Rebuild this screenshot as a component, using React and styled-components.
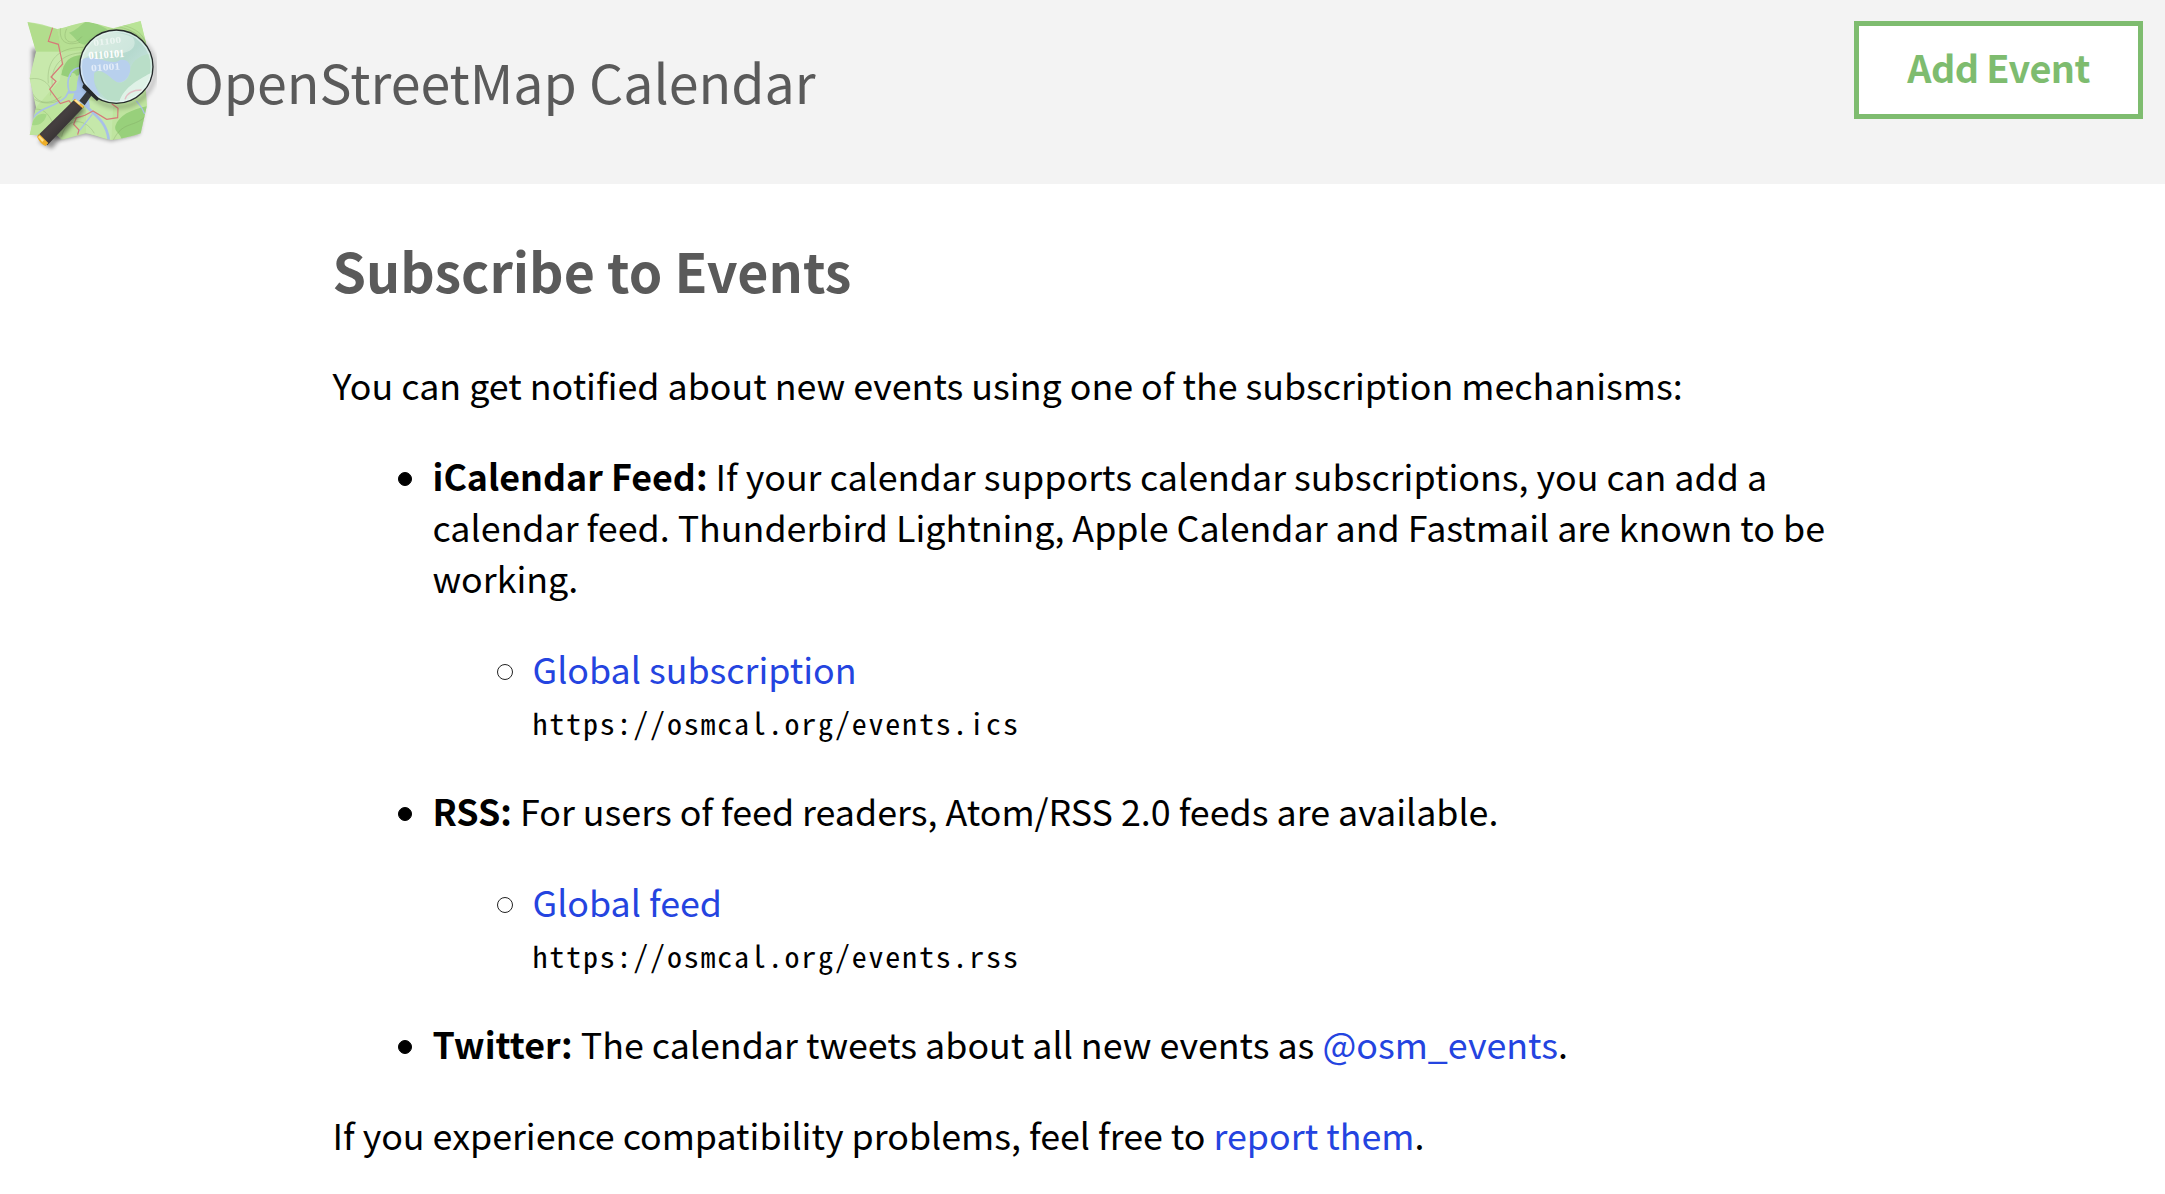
import React from "react";
import styled, { createGlobalStyle } from "styled-components";

const Global = createGlobalStyle`
  body {
    margin: 0;
    background: #fff;
    color: #000;
    font-family: "Noto Sans CJK SC", "Noto Sans", sans-serif;
    font-size: 35.8px;
    line-height: 51px;
  }
`;

const Header = styled.header`
  display: flex;
  justify-content: space-between;
  align-items: flex-start;
  box-sizing: border-box;
  height: 184px;
  padding: 18px 22px 0 24px;
  background: #f3f3f3;
`;

const Brand = styled.a`
  display: flex;
  align-items: flex-start;
  gap: 27px;
  color: #5a5a5a;
`;

const Logo = styled.svg`
  display: block;
  width: 133px;
  height: 138px;
`;

const Title = styled.span`
  margin-top: 23px;
  font-size: 53.7px;
  line-height: 80px;
  white-space: nowrap;
`;

const AddButton = styled.a`
  margin-top: 3px;
  width: 279px;
  height: 88px;
  border: 5px solid #7ebc6f;
  background: #fff;
  color: #7ebc6f;
  font-size: 37.8px;
  font-weight: 700;
  letter-spacing: -0.6px;
  line-height: 82px;
  text-align: center;
`;

const Main = styled.main`
  width: 1500px;
  margin: 0 auto;
`;

const Heading = styled.h1`
  margin: 46px 0 49px;
  color: #5a5a5a;
  font-size: 53.7px;
  line-height: 80px;
`;

const Paragraph = styled.p`
  margin: 0 0 40px;
`;

const List = styled.ul`
  margin: 0 0 40px;
  padding: 0 0 0 100px;
  list-style: none;
`;

const Item = styled.li`
  margin-bottom: 40px;

  &::before {
    content: "";
    display: inline-block;
    box-sizing: border-box;
    width: ${(p) => (p.$hollow ? 16 : 14)}px;
    height: ${(p) => (p.$hollow ? 16 : 14)}px;
    margin-left: ${(p) => (p.$hollow ? -36 : -35)}px;
    margin-right: ${(p) => (p.$hollow ? 20 : 21)}px;
    border: 1px solid ${(p) => (p.$hollow ? "#222" : "#000")};
    border-radius: 50%;
    background: ${(p) => (p.$hollow ? "transparent" : "#000")};
    vertical-align: ${(p) => (p.$hollow ? 4 : 5)}px;
  }
`;

const SubList = styled(List)`
  margin: 40px 0 0;
`;

const Link = styled.a`
  color: #2444e0;
`;

const Code = styled.code`
  display: block;
  height: 51px;
  font-family: "Noto Sans Mono CJK SC", "Liberation Mono", monospace;
  font-size: 30px;
  letter-spacing: 1.8px;
  line-height: 56px;
`;

function OsmLogo() {
  return (
    <Logo viewBox="72 54 399 414" role="img" aria-label="OpenStreetMap">
      <defs>
        <filter id="soft" x="-20%" y="-20%" width="140%" height="140%">
          <feGaussianBlur stdDeviation="7" />
        </filter>
        <linearGradient id="lens" x1="0" y1="0" x2="1" y2="1">
          <stop offset="0" stopColor="#d3e9dc" />
          <stop offset="0.5" stopColor="#b5d9ce" />
          <stop offset="1" stopColor="#dcecf0" />
        </linearGradient>
        <linearGradient id="grip" x1="0" y1="0" x2="1" y2="1">
          <stop offset="0" stopColor="#222" />
          <stop offset="0.45" stopColor="#453f40" />
          <stop offset="1" stopColor="#1b1b1b" />
        </linearGradient>
        <clipPath id="sheet">
          <path d="M82 66C112 68 142 78 172 87C202 82 228 70 256 66C286 68 312 78 340 85L422 63L441 140L433 220L441 315L422 400C394 409 366 417 334 420C306 416 284 404 258 400L186 419L170 405L89 405L108 322L89 235L108 155Z" />
        </clipPath>
        <clipPath id="glass">
          <circle cx="349" cy="200" r="109" />
        </clipPath>
      </defs>
      <path d="M96 145L100 403L186 420L258 403L334 422L418 403L434 315L428 200Z" fill="#000" opacity="0.4" filter="url(#soft)" />
      <g clipPath="url(#sheet)">
        <path d="M72 54h390v380H72z" fill="#bfe49f" />
        <path d="M82 66L172 87L186 155L108 155Z" fill="#b2dd8d" />
        <path d="M108 155L186 155L180 240L108 322L89 235Z" fill="#c8e9ac" />
        <path d="M172 87L256 66L340 85L260 150L186 155Z" fill="#b7e093" />
        <path d="M340 85L422 63L441 140L433 220L400 130Z" fill="#b9e497" />
        <path d="M108 322L190 305L186 419L89 405Z" fill="#bde49c" />
        <path d="M258 300L340 310L334 420L258 400Z" fill="#c5e8aa" />
        <path d="M207 98C230 91 240 75 258 65C284 66 300 75 322 88L255 134C235 133 228 114 207 98Z" fill="#9bd17f" />
        <path d="M184 225C190 185 210 166 245 165L240 225L206 232Z" fill="#96ce79" />
        <path d="M96 375C100 348 122 337 140 343C136 367 115 380 96 375Z" fill="#a5d886" />
        <path d="M346 378C356 345 395 328 443 318V400L365 418C361 400 342 396 346 378Z" fill="#98d07b" />
        <g fill="none" stroke="#77965c" strokeWidth="1.3" opacity="0.65">
          <path d="M145 250C138 180 175 142 250 142M157 260C150 198 185 160 250 158M89 237C130 228 160 260 151 286M90 265C112 320 150 312 184 290M94 290C120 315 155 312 180 300" />
          <path d="M185 68C172 116 190 142 240 127M200 86C180 130 225 138 245 110M352 80C385 85 415 100 430 125M365 75C410 85 430 105 438 130" />
          <path d="M90 330C130 320 150 338 170 400M150 405C185 390 200 350 250 350M185 410C195 360 250 345 283 400M340 420C370 360 405 385 440 345" />
        </g>
        <path d="M242 205C230 250 225 275 217 300L270 322L260 250Z" fill="#a8c3e9" />
        <g fill="none" stroke="#a8c0e8" strokeLinecap="round">
          <path d="M242 203C208 204 198 244 207 273L197 291C165 323 125 318 99 354" strokeWidth="5" />
          <path d="M238 274L207 277M245 300C270 342 318 353 326 418" strokeWidth="8" />
          <path d="M276 344L234 397M410 304Q427 322 433 340" strokeWidth="4" />
        </g>
        <path d="M215 220C232 212 233 245 229 271C214 279 209 270 208 257Z" fill="#b9e39c" />
        <path d="M158 82L145 124L175 133L188 192L153 231L168 244L149 268L181 311L207 302L225 327M233 404L237 390L221 373L229 354L255 346L279 333L320 358L353 353L354 325L335 311" fill="none" stroke="#d67a78" strokeWidth="3.5" />
      </g>
      <circle cx="355" cy="210" r="111" fill="none" stroke="#000" strokeWidth="12" opacity="0.22" filter="url(#soft)" />
      <circle cx="349" cy="200" r="109" fill="url(#lens)" />
      <g clipPath="url(#glass)">
        <path d="M235 190C270 145 325 205 360 180C397 172 400 220 375 241C350 259 331 234 309 223C274 208 275 250 300 285L280 300L240 250Z" fill="#b8d0ed" />
        <path d="M283 218C307 198 339 246 355 248C371 252 392 232 391 205C405 162 460 160 460 160V260C435 300 380 300 330 308C298 278 278 255 283 218Z" fill="#b9dec8" />
        <path d="M240 185C240 100 330 80 398 112C421 146 373 171 330 155C285 150 264 167 240 185Z" fill="#e2f1e9" opacity="0.55" />
        <path d="M456 217C425 235 370 260 358 306C410 310 449 266 456 217Z" fill="#e9f6ef" opacity="0.8" />
        <path d="M375 298C382 276 405 270 425 270" fill="none" stroke="#e3bfc5" strokeWidth="4" />
        <g fill="#fff" fontFamily="Liberation Serif, serif" fontWeight="700">
          <text x="281" y="138" fontSize="27" textLength="84" lengthAdjust="spacingAndGlyphs" opacity="0.55" transform="rotate(-7 281 138)">01100</text>
          <text x="266" y="178" fontSize="33" textLength="108" lengthAdjust="spacingAndGlyphs" transform="rotate(-4 266 178)">0110101</text>
          <text x="274" y="214" fontSize="29" textLength="87" lengthAdjust="spacingAndGlyphs" opacity="0.6" transform="rotate(-4 274 214)">01001</text>
        </g>
      </g>
      <circle cx="349" cy="200" r="105" fill="none" stroke="#edf8f7" strokeWidth="4" opacity="0.55" />
      <circle cx="349" cy="200" r="110" fill="none" stroke="#25292b" strokeWidth="4" />
      <path d="M116 425L230 310L255 330L155 446Z" fill="#000" opacity="0.4" filter="url(#soft)" />
      <path d="M263 271L276 284L254 316L238 302Z" fill="#36393b" />
      <path d="M254 251L298 296L291 303L247 263Q247 254 254 251Z" fill="#26292b" />
      <path d="M225 297L252 320L142 436L113 407Z" fill="url(#grip)" />
      <path d="M225 296L252 319L248 325L220 301Z" fill="#f4b83e" />
      <path d="M228 298L242 310L238 314L224 302Z" fill="#ffe49b" />
      <path d="M118 402L145 429L137 438Q120 431 111 410Z" fill="#edae29" />
      <path d="M119 407L132 420L127 426L114 411Z" fill="#ffe18a" />
    </Logo>
  );
}

export default function App() {
  return (
    <>
      <Global />
      <Header>
        <Brand>
          <OsmLogo />
          <Title>OpenStreetMap Calendar</Title>
        </Brand>
        <AddButton>Add Event</AddButton>
      </Header>
      <Main>
        <Heading>Subscribe to Events</Heading>
        <Paragraph>
          You can get notified about new events using one of the subscription mechanisms:
        </Paragraph>
        <List>
          <Item>
            <strong>iCalendar Feed:</strong> If your calendar supports calendar subscriptions, you can
            add a calendar feed. Thunderbird Lightning, Apple Calendar and Fastmail are known to be
            working.
            <SubList>
              <Item $hollow>
                <Link>Global subscription</Link>
                <Code>https://osmcal.org/events.ics</Code>
              </Item>
            </SubList>
          </Item>
          <Item>
            <strong>RSS:</strong> For users of feed readers, Atom/RSS 2.0 feeds are available.
            <SubList>
              <Item $hollow>
                <Link>Global feed</Link>
                <Code>https://osmcal.org/events.rss</Code>
              </Item>
            </SubList>
          </Item>
          <Item>
            <strong>Twitter:</strong> The calendar tweets about all new events as{" "}
            <Link>@osm_events</Link>.
          </Item>
        </List>
        <Paragraph>
          If you experience compatibility problems, feel free to <Link>report them</Link>.
        </Paragraph>
      </Main>
    </>
  );
}
